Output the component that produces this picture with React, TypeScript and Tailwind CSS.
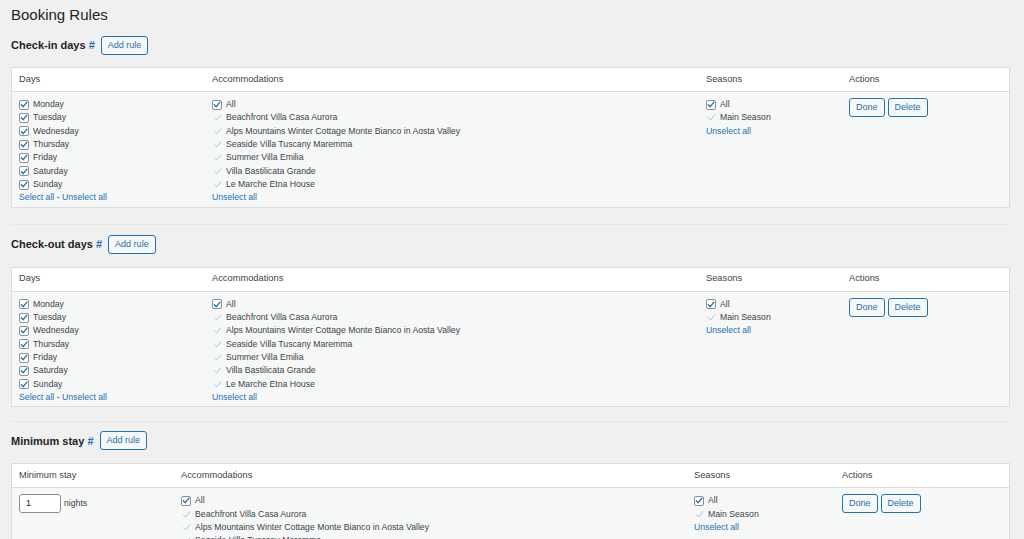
import React from 'react'

const DAYS = ['Monday', 'Tuesday', 'Wednesday', 'Thursday', 'Friday', 'Saturday', 'Sunday']
const ACCOMMODATIONS = [
  'Beachfront Villa Casa Aurora',
  'Alps Mountains Winter Cottage Monte Bianco in Aosta Valley',
  'Seaside Villa Tuscany Maremma',
  'Summer Villa Emilia',
  'Villa Bastilicata Grande',
  'Le Marche Etna House',
]

function Check({ light }: { light?: boolean }) {
  return (
    <svg viewBox="0 0 10 10" className="w-[9px] h-[9px]" fill="none">
      <path
        d="M1.6 5.3 L4 7.7 L8.7 2.1"
        stroke={light ? '#9fc3e6' : '#2271b1'}
        strokeWidth={light ? 1.1 : 1.7}
        strokeLinecap="round"
        strokeLinejoin="round"
      />
    </svg>
  )
}

function Checkbox({ label }: { label: string }) {
  return (
    <div className="flex items-center h-[13.33px] gap-[4px]">
      <span className="w-[10px] h-[10px] border border-[#8c8f94] rounded-[2px] bg-white flex items-center justify-center shrink-0">
        <Check />
      </span>
      <span>{label}</span>
    </div>
  )
}

function SubItem({ label }: { label: string }) {
  return (
    <div className="flex items-center h-[13.33px] gap-[4px]">
      <span className="w-[10px] h-[10px] flex items-center justify-center shrink-0">
        <Check light />
      </span>
      <span>{label}</span>
    </div>
  )
}

function Link({ children }: { children: React.ReactNode }) {
  return <span className="text-[#2271b1]">{children}</span>
}

function Btn({ children }: { children: React.ReactNode }) {
  return (
    <button className="h-[19px] px-[6px] border border-[#2271b1] rounded-[3px] bg-[#f6f7f7] text-[#2271b1] text-[9px] leading-none">
      {children}
    </button>
  )
}

function Accommodations() {
  return (
    <div>
      <Checkbox label="All" />
      {ACCOMMODATIONS.map((a) => (
        <SubItem key={a} label={a} />
      ))}
      <div className="h-[13.33px] flex items-center"><Link>Unselect all</Link></div>
    </div>
  )
}

function Seasons() {
  return (
    <div>
      <Checkbox label="All" />
      <SubItem label="Main Season" />
      <div className="h-[13.33px] flex items-center"><Link>Unselect all</Link></div>
    </div>
  )
}

function Actions() {
  return (
    <div className="flex gap-[3px]">
      <Btn>Done</Btn>
      <Btn>Delete</Btn>
    </div>
  )
}

function Heading({ title }: { title: string }) {
  return (
    <div className="flex items-center gap-[6px] h-[19px]">
      <h2 className="text-[11px] font-bold text-[#1d2327]">
        {title} <span className="text-[#2271b1]">#</span>
      </h2>
      <Btn>Add rule</Btn>
    </div>
  )
}

function RuleTable({ cols, first, gap }: { cols: string; first: 'days' | 'stay'; gap: string }) {
  return (
    <div className={`${gap} w-[999px] border border-[#dcdcde] text-[8.7px] text-[#3c434a]`}>
      <div className={`grid ${cols} px-[7px] h-[24px] items-center bg-white border-b border-[#dcdcde] text-[9.3px]`}>
        <div>{first === 'days' ? 'Days' : 'Minimum stay'}</div>
        <div>Accommodations</div>
        <div>Seasons</div>
        <div>Actions</div>
      </div>
      <div className={`grid ${cols} px-[7px] pt-[6px] pb-[2px] bg-[#f6f7f7]`}>
        {first === 'days' ? (
          <div>
            {DAYS.map((d) => (
              <Checkbox key={d} label={d} />
            ))}
            <div className="h-[13.33px] flex items-center">
              <Link>Select all</Link>&nbsp;-&nbsp;<Link>Unselect all</Link>
            </div>
          </div>
        ) : (
          <div className="flex items-start gap-[3px]">
            <div className="w-[42px] h-[19px] border border-[#8c8f94] rounded-[3px] bg-white flex items-center px-[6px] text-[9px] text-[#1d2327]">1</div>
            <span className="leading-[19px]">nights</span>
          </div>
        )}
        <Accommodations />
        <Seasons />
        <Actions />
      </div>
    </div>
  )
}

export default function App() {
  return (
    <div
      className="min-h-screen bg-[#f0f0f1] pl-[11px] pt-[5px] pb-[20px] overflow-hidden"
      style={{ fontFamily: '"Liberation Sans", Arial, sans-serif' }}
    >
      <h1 className="text-[15px] h-[20px] leading-[20px] text-[#1d2327]">Booking Rules</h1>

      <div className="mt-[11px]">
        <Heading title="Check-in days" />
        <RuleTable gap="mt-[12px]" cols="grid-cols-[193px_494px_143px_1fr]" first="days" />
      </div>
      <div className="mt-[16px] w-[999px] h-px bg-[#e6e6e7]" />

      <div className="mt-[10px]">
        <Heading title="Check-out days" />
        <RuleTable gap="mt-[13px]" cols="grid-cols-[193px_494px_143px_1fr]" first="days" />
      </div>
      <div className="mt-[14px] w-[999px] h-px bg-[#e6e6e7]" />

      <div className="mt-[9px]">
        <Heading title="Minimum stay" />
        <RuleTable gap="mt-[13px]" cols="grid-cols-[162px_513px_148px_1fr]" first="stay" />
      </div>
    </div>
  )
}
